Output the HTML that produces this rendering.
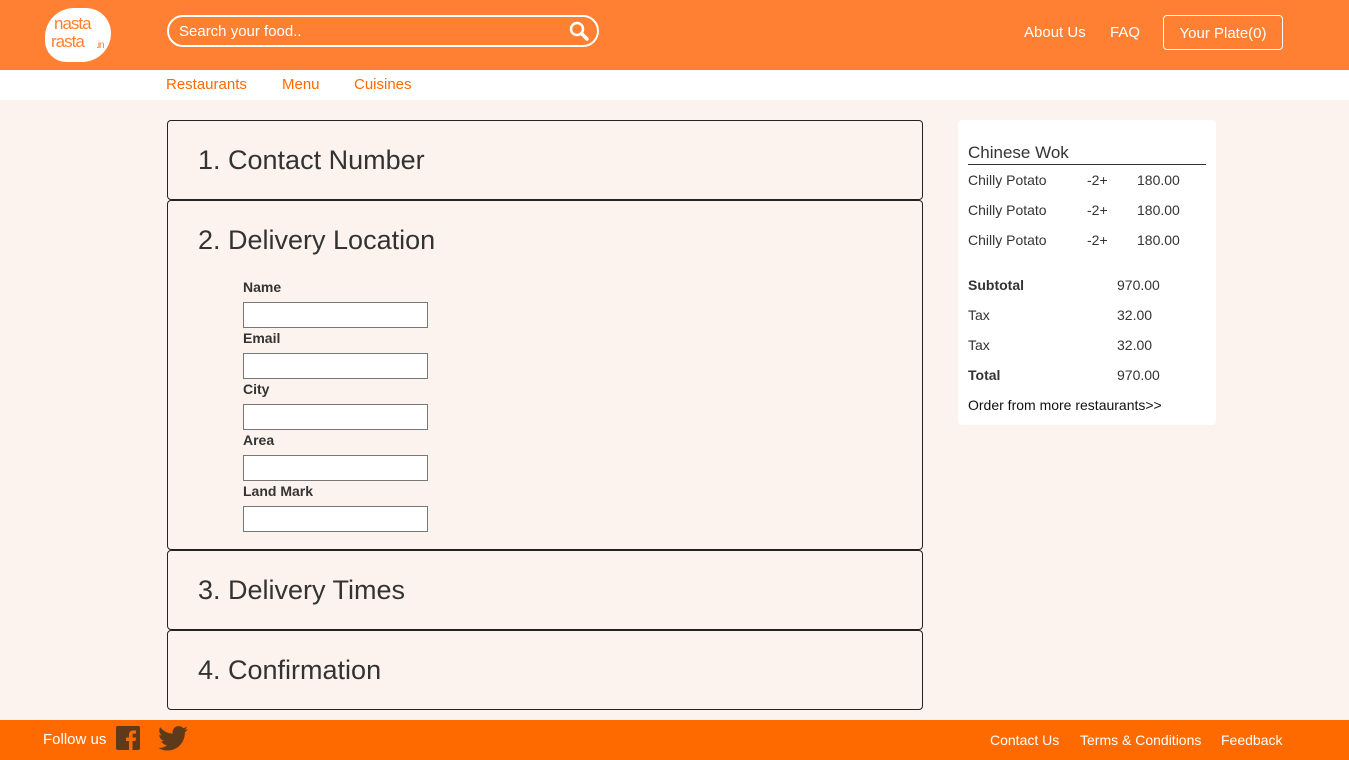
<!DOCTYPE html>
<html><head><meta charset="utf-8"><style>
*{box-sizing:border-box;margin:0;padding:0}
body{width:1349px;height:760px;overflow:hidden;background:#fdf3ee;font-family:"Liberation Sans",sans-serif;color:#333;position:relative}
.hdr{position:absolute;left:0;top:0;width:1349px;height:70px;background:#ff8033}
.logo{position:absolute;left:45px;top:8px;width:66px;height:54px;background:#fff;border-radius:30px 26px 30px 22px;}
.logo span{position:absolute;color:#ff8033;font-size:17px;letter-spacing:-1px;line-height:17px}
.search{position:absolute;left:167px;top:15px;width:432px;height:32px;border:2px solid #fff;border-radius:16px;color:#fff;font-size:15px;padding:6px 10px}
.nav{position:absolute;top:24px;color:#fff;font-size:15px}
.plate{position:absolute;left:1163px;top:15px;width:120px;height:35px;border:1px solid #fff;border-radius:4px;color:#fff;font-size:15px;text-align:center;line-height:35px}
.sub{position:absolute;left:0;top:70px;width:1349px;height:30px;background:#fff}
.sub span{position:absolute;top:6px;color:#ff6a00;font-size:15px}
.box{position:absolute;left:167px;width:756px;border:1px solid #222;border-radius:4px;background:#fdf3ee}
.box h2{position:absolute;left:30px;top:24px;font-size:27px;font-weight:normal;color:#333}
.lbl{position:absolute;left:75px;font-size:14px;font-weight:bold;color:#333}
.inp{position:absolute;left:75px;width:185px;height:26px;border:1px solid #777;background:#fff}
.side{position:absolute;left:958px;top:120px;width:258px;height:305px;background:#fff;border-radius:4px;font-size:14px}
.side div{position:absolute}
.ftr{position:absolute;left:0;top:720px;width:1349px;height:40px;background:#ff6a00;color:#fff;font-size:14px}
.ftr span{position:absolute;top:12px}
</style></head><body>
<div class="hdr">
<div class="logo"><span style="left:9px;top:7px">nasta</span><span style="left:6px;top:25px">rasta</span><span style="left:51px;top:29px;font-size:10px">.in</span></div>
<div class="search">Search your food..
<svg style="position:absolute;right:8px;top:4px" width="20" height="20" viewBox="0 0 20 20"><circle cx="8" cy="8" r="6" fill="none" stroke="#fff" stroke-width="2.5"/><path d="M12.5 12.5L18 18" stroke="#fff" stroke-width="3.5" stroke-linecap="round"/></svg></div>
<div class="nav" style="left:1024px">About Us</div>
<div class="nav" style="left:1110px">FAQ</div>
<div class="plate">Your Plate(0)</div>
</div>
<div class="sub"><span style="left:166px">Restaurants</span><span style="left:282px">Menu</span><span style="left:354px">Cuisines</span></div>

<div class="box" style="top:120px;height:80px"><h2>1. Contact Number</h2></div>
<div class="box" style="top:200px;height:350px"><h2>2. Delivery Location</h2>
<div class="lbl" style="top:78px">Name</div><div class="inp" style="top:101px"></div>
<div class="lbl" style="top:129px">Email</div><div class="inp" style="top:152px"></div>
<div class="lbl" style="top:180px">City</div><div class="inp" style="top:203px"></div>
<div class="lbl" style="top:231px">Area</div><div class="inp" style="top:254px"></div>
<div class="lbl" style="top:282px">Land Mark</div><div class="inp" style="top:305px"></div>
</div>
<div class="box" style="top:550px;height:80px"><h2>3. Delivery Times</h2></div>
<div class="box" style="top:630px;height:80px"><h2>4. Confirmation</h2></div>

<div class="side">
<div style="left:10px;top:23px;width:238px;font-size:17px;border-bottom:1px solid #333;padding-bottom:1px">Chinese Wok</div>
<div style="left:10px;top:52px">Chilly Potato</div><div style="left:129px;top:52px">-2+</div><div style="left:179px;top:52px">180.00</div>
<div style="left:10px;top:82px">Chilly Potato</div><div style="left:129px;top:82px">-2+</div><div style="left:179px;top:82px">180.00</div>
<div style="left:10px;top:112px">Chilly Potato</div><div style="left:129px;top:112px">-2+</div><div style="left:179px;top:112px">180.00</div>
<div style="left:10px;top:157px;font-weight:bold">Subtotal</div><div style="left:159px;top:157px">970.00</div>
<div style="left:10px;top:187px">Tax</div><div style="left:159px;top:187px">32.00</div>
<div style="left:10px;top:217px">Tax</div><div style="left:159px;top:217px">32.00</div>
<div style="left:10px;top:247px;font-weight:bold">Total</div><div style="left:159px;top:247px">970.00</div>
<div style="left:10px;top:277px;color:#111">Order from more restaurants&gt;&gt;</div>
</div>

<div class="ftr">
<span style="left:43px;top:11px;font-size:15px">Follow us</span>
<svg style="position:absolute;left:116px;top:6px" width="24" height="24" viewBox="0 0 24 24"><rect width="24" height="24" rx="2" fill="#5e3a1a"/><path d="M16.5 24V15H19.5L20 11.5H16.5V9.3C16.5 8.3 16.8 7.6 18.2 7.6H20V4.5C19.7 4.5 18.6 4.4 17.4 4.4 14.8 4.4 13 6 13 8.9V11.5H10V15H13V24Z" fill="#ff6a00"/></svg>
<svg style="position:absolute;left:158px;top:6px" width="30" height="25" viewBox="0 0 24 20"><path d="M24 2.4a9.8 9.8 0 0 1-2.8.8 4.9 4.9 0 0 0 2.1-2.7 9.8 9.8 0 0 1-3.1 1.2A4.9 4.9 0 0 0 11.8 6.2 14 14 0 0 1 1.7 1 4.9 4.9 0 0 0 3.2 7.6a4.9 4.9 0 0 1-2.2-.6 4.9 4.9 0 0 0 3.9 4.9 4.9 4.9 0 0 1-2.2.1 4.9 4.9 0 0 0 4.6 3.4A9.9 9.9 0 0 1 0 17.4 14 14 0 0 0 7.5 19.6c9.1 0 14-7.5 14-14v-.6A10 10 0 0 0 24 2.4z" fill="#5e3a1a"/></svg>
<span style="left:990px">Contact Us</span><span style="left:1080px">Terms &amp; Conditions</span><span style="left:1221px">Feedback</span>
</div>
</body></html>
